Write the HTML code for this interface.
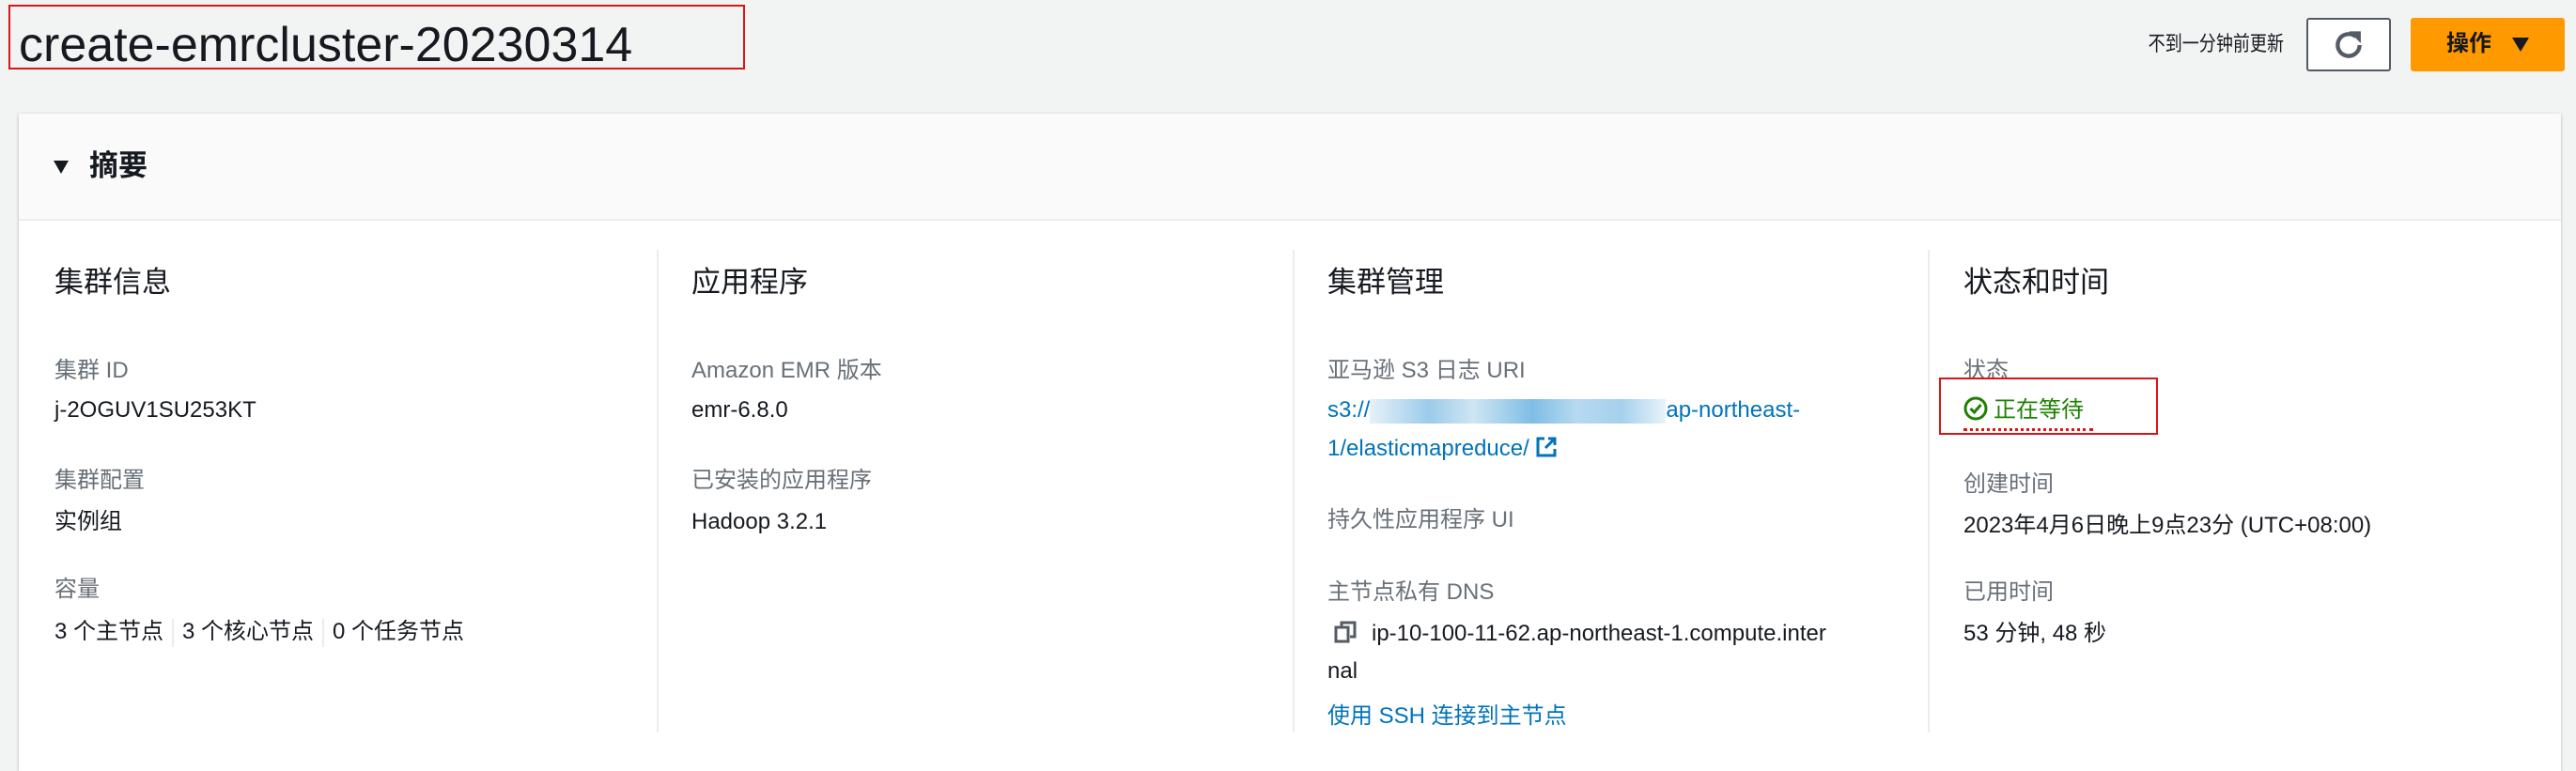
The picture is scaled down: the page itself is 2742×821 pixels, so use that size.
<!DOCTYPE html>
<html><head><meta charset="utf-8"><style>
*{margin:0;padding:0;box-sizing:border-box}
body{width:2742px;height:808px;background:#f2f3f3;font-family:"Liberation Sans","Noto Sans CJK SC",sans-serif;color:#16191f;position:relative;overflow:hidden}
.a{position:absolute;white-space:nowrap;line-height:40px;font-size:24px}
.l{color:#687078}
.h{font-size:31px;line-height:44px}
.k{color:#0073bb}
.dv{position:absolute;top:266px;width:2px;height:514px;background:#eaeded}
</style></head><body>
<div style="position:absolute;left:9px;top:5px;width:784px;height:69px;border:2px solid #d91515"></div>
<div class="a" style="left:20px;top:18px;font-size:52px;line-height:60px">create-emrcluster-20230314</div>
<div class="a" style="right:311px;top:27px;font-size:22px;transform:scaleX(0.82);transform-origin:right center">不到一分钟前更新</div>
<div style="position:absolute;left:2455px;top:19px;width:90px;height:57px;border:2px solid #545b64;border-radius:3px;background:#fff">
<svg width="40" height="40" viewBox="0 0 24 24" style="position:absolute;left:23px;top:7px"><path d="M19 12a7 7 0 1 1-2.5-5.4" fill="none" stroke="#545b64" stroke-width="2.6"/><path d="M14 4h5v5z" fill="#545b64" stroke="#545b64" stroke-width="1.5"/></svg></div>
<div style="position:absolute;left:2566px;top:19px;width:164px;height:57px;background:#ff9900;border-radius:3px"></div>
<div class="a" style="left:2604px;top:27px;font-weight:bold">操作</div>
<svg style="position:absolute;left:2674px;top:40px" width="18" height="15"><path d="M0 0h18L9 15z" fill="#16191f"/></svg>
<div style="position:absolute;left:20px;top:121px;width:2706px;height:700px;background:#fff;box-shadow:0 1px 3px rgba(0,28,36,.3)"></div>
<div style="position:absolute;left:20px;top:121px;width:2706px;height:114px;background:#fafafa;border-bottom:2px solid #eaeded"></div>
<svg style="position:absolute;left:57px;top:169px" width="16" height="16"><path d="M0 2h16L8 16z" fill="#16191f"/></svg>
<div class="a h" style="left:95px;top:155px;font-weight:bold">摘要</div>
<div class="dv" style="left:699px"></div><div class="dv" style="left:1376px"></div><div class="dv" style="left:2052px"></div>
<div class="a h" style="left:58px;top:279px">集群信息</div>
<div class="a l" style="left:58px;top:375px">集群 ID</div>
<div class="a" style="left:58px;top:417px">j-2OGUV1SU253KT</div>
<div class="a l" style="left:58px;top:492px">集群配置</div>
<div class="a" style="left:58px;top:536px">实例组</div>
<div class="a l" style="left:58px;top:608px">容量</div>
<div class="a" style="left:58px;top:653px">3 个主节点<span style="display:inline-block;width:2px;height:30px;background:#eaeded;margin:0 9px;vertical-align:middle"></span>3 个核心节点<span style="display:inline-block;width:2px;height:30px;background:#eaeded;margin:0 9px;vertical-align:middle"></span>0 个任务节点</div>
<div class="a h" style="left:736px;top:279px">应用程序</div>
<div class="a l" style="left:736px;top:375px">Amazon EMR 版本</div>
<div class="a" style="left:736px;top:417px">emr-6.8.0</div>
<div class="a l" style="left:736px;top:492px">已安装的应用程序</div>
<div class="a" style="left:736px;top:536px">Hadoop 3.2.1</div>
<div class="a h" style="left:1413px;top:279px">集群管理</div>
<div class="a l" style="left:1413px;top:375px">亚马逊 S3 日志 URI</div>
<div class="a k" style="left:1413px;top:417px">s3://<span style="display:inline-block;width:315px;height:26px;vertical-align:middle;background:linear-gradient(90deg,#e6f1f9,#9ccbea 20%,#cfe5f4 35%,#7fbde5 55%,#b7d9f0 70%,#a5d0ec 85%,#e9f3fa)"></span>ap-northeast-</div>
<div class="a k" style="left:1413px;top:458px">1/elasticmapreduce/ <svg width="24" height="24" viewBox="0 0 24 24" style="vertical-align:-3px"><path d="M10 3H3v18h18v-7" fill="none" stroke="#0073bb" stroke-width="3"/><path d="M14 3h7v7M21 3L11 13" fill="none" stroke="#0073bb" stroke-width="3"/></svg></div>
<div class="a l" style="left:1413px;top:534px">持久性应用程序 UI</div>
<div class="a l" style="left:1413px;top:611px">主节点私有 DNS</div>
<div class="a" style="left:1420px;top:655px"><svg width="24" height="24" viewBox="0 0 24 24" style="vertical-align:-3px;margin-right:16px"><rect x="2" y="7" width="13" height="15" fill="none" stroke="#545b64" stroke-width="3"/><path d="M8 6V2h14v15h-5" fill="none" stroke="#545b64" stroke-width="3"/></svg>ip-10-100-11-62.ap-northeast-1.compute.inter</div>
<div class="a" style="left:1413px;top:695px">nal</div>
<div class="a k" style="left:1413px;top:743px">使用 SSH 连接到主节点</div>
<div class="a h" style="left:2090px;top:279px">状态和时间</div>
<div class="a l" style="left:2090px;top:375px">状态</div>
<div style="position:absolute;left:2064px;top:402px;width:233px;height:61px;border:2px solid #d91515"></div>
<div class="a" style="left:2090px;top:417px;color:#1d8102"><svg width="26" height="26" viewBox="0 0 26 26" style="vertical-align:-4px;margin-right:6px"><circle cx="13" cy="13" r="11" fill="none" stroke="#1d8102" stroke-width="3"/><path d="M7.5 13l4 4 7-8" fill="none" stroke="#1d8102" stroke-width="3"/></svg>正在等待</div>
<div style="position:absolute;left:2090px;top:456px;width:138px;border-top:3px dotted #d91515"></div>
<div class="a l" style="left:2090px;top:496px">创建时间</div>
<div class="a" style="left:2090px;top:540px">2023年4月6日晚上9点23分 (UTC+08:00)</div>
<div class="a l" style="left:2090px;top:611px">已用时间</div>
<div class="a" style="left:2090px;top:655px">53 分钟, 48 秒</div>
</body></html>
